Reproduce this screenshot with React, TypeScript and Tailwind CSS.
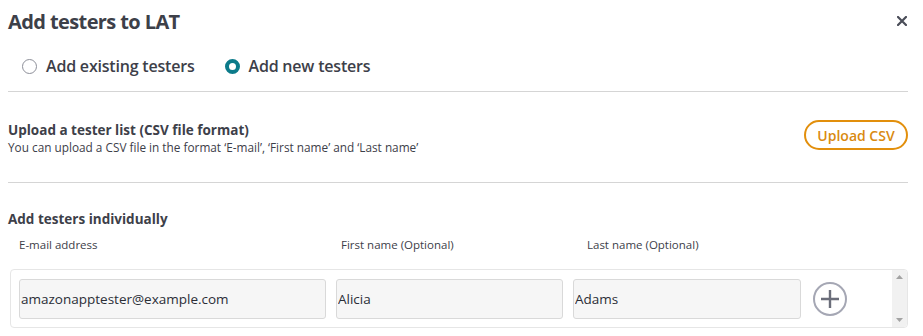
const Radio = ({ checked, label }: { checked?: boolean; label: string }) => {
  return (
    <label className="flex items-center gap-[9px] cursor-pointer">
      {checked ? (
        <span className="block h-[15px] w-[15px] rounded-full border-[4.5px] border-[#0c7b8a] bg-white" />
      ) : (
        <span className="block h-[15px] w-[15px] rounded-full border border-[#8d8f99] bg-white" />
      )}
      <span className="text-[16px] font-semibold tracking-[-0.2px] text-[#3d4049]">{label}</span>
    </label>
  );
};

const Field = ({ value, width }: { value: string; width: string }) => {
  return (
    <input
      type="text"
      defaultValue={value}
      className={`${width} h-[40px] rounded-[3px] border border-[#d9d9d9] bg-[#f6f6f6] px-[1px] text-[13.5px] text-[#2b2e36] outline-none`}
    />
  );
};

const App = () => {
  return (
    <div className="h-[336px] w-[923px] overflow-hidden bg-white pl-2 pr-[15px] font-['Open_Sans',sans-serif] text-[#3d4049]">
      <div className="flex h-[36px] items-end justify-between">
        <h1 className="text-[20px] font-bold leading-[28px] tracking-[-0.6px]">Add testers to LAT</h1>
        <button className="mb-[10px] mr-[1px] text-[#4a4d58]">
          <svg width="10" height="10" viewBox="0 0 10 10">
            <path d="M1 1L9 9M9 1L1 9" stroke="currentColor" strokeWidth="2.2" strokeLinecap="square" />
          </svg>
        </button>
      </div>

      <div className="flex h-[44px] items-center gap-[30px] pl-[14px] pt-[16px]">
        <Radio label="Add existing testers" />
        <Radio checked label="Add new testers" />
      </div>

      <div className="mt-[11px] border-t border-[#d5d5d5]" />

      <div className="flex h-[90px] items-center justify-between">
        <div className="pt-[1px]">
          <div className="text-[13.5px] font-bold leading-[18px]">Upload a tester list (CSV file format)</div>
          <div className="text-[11.8px] leading-[16px] text-[#3d4049]">
            You can upload a CSV file in the format ‘E-mail’, ‘First name’ and ‘Last name’
          </div>
        </div>
        <button className="mb-[4px] h-[30px] w-[104px] rounded-full border-2 border-[#e28f0c] text-[14px] font-semibold text-[#d98a10]">
          Upload CSV
        </button>
      </div>

      <div className="border-t border-[#d5d5d5]" />

      <div className="pt-[27px] text-[13.5px] font-bold leading-[18px]">Add testers individually</div>

      <div className="mt-[9px] flex text-[11.5px] leading-[16px] text-[#3d4049]">
        <span className="w-[322px] pl-[11px]">E-mail address</span>
        <span className="w-[246px] pl-[11px]">First name (Optional)</span>
        <span className="pl-[11px]">Last name (Optional)</span>
      </div>

      <div className="ml-[2px] mt-[16px] flex h-[59px] rounded-[4px] border border-[#e6e6e6]">
        <div className="flex flex-1 items-center gap-[10px] pl-[8px]">
          <Field value="amazonapptester@example.com" width="w-[307px]" />
          <Field value="Alicia" width="w-[227px]" />
          <Field value="Adams" width="w-[228px]" />
          <button className="ml-[1px] text-[#6b6e7a]">
            <svg width="36" height="36" viewBox="0 0 36 36">
              <circle cx="18" cy="18" r="16" fill="none" stroke="#a5a7b4" strokeWidth="2" />
              <path d="M18 9V27M9 18H27" stroke="#6b6e7a" strokeWidth="2.4" />
            </svg>
          </button>
        </div>
        <div className="flex w-[15px] flex-col items-center justify-between rounded-r-[4px] bg-[#f1f1f1] py-[5px]">
          <svg width="7" height="4" viewBox="0 0 7 4">
            <path d="M0 4L3.5 0L7 4Z" fill="#a3a3a3" />
          </svg>
          <svg width="7" height="4" viewBox="0 0 7 4">
            <path d="M0 0L3.5 4L7 0Z" fill="#a3a3a3" />
          </svg>
        </div>
      </div>
    </div>
  );
};

export default App;
